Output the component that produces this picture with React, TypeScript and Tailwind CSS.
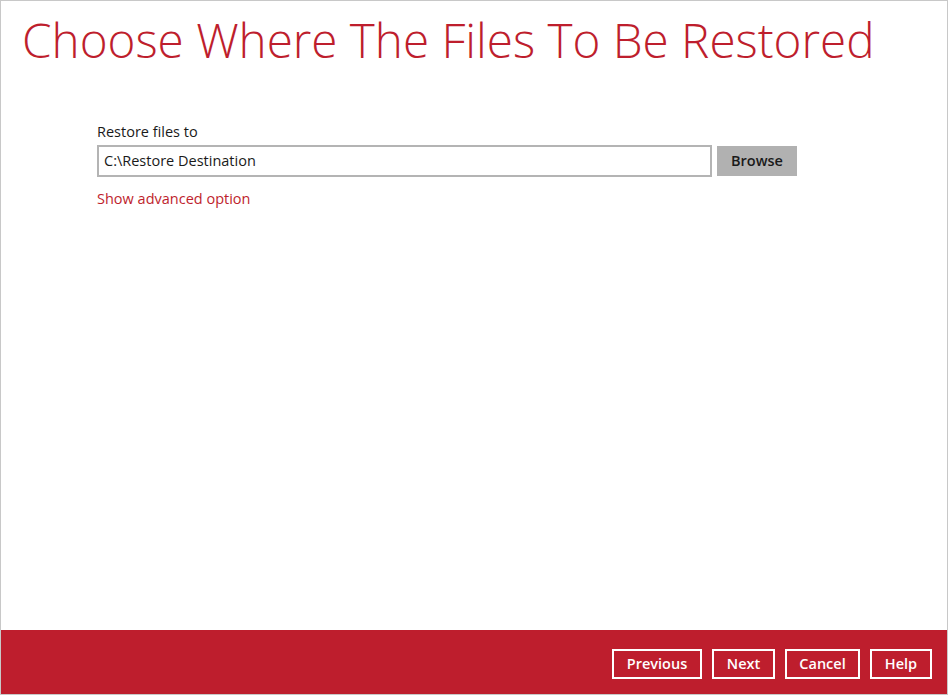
import React from "react";

export default function App() {
  const font = { fontFamily: '"Open Sans", "Noto Sans", sans-serif' };
  const btn =
    "h-[30px] border-2 border-white text-white font-semibold text-[14.5px] flex items-center justify-center";
  return (
    <div style={font} className="w-[948px] h-[695px] border border-[#c8c8c8] bg-white flex flex-col">
      <div className="flex-1 flex flex-col">
        <h1 className="text-[#be1e2d] text-[47.6px] font-light leading-none pl-[21px] pt-[15px]">
          Choose Where The Files To Be Restored
        </h1>
        <div className="pl-[96px] pt-[58px] flex flex-col">
          <div className="text-[14.5px] text-[#1a1a1a] leading-[19px]">Restore files to</div>
          <div className="flex items-center gap-[5px] mt-[4px]">
            <div className="w-[615px] h-[32px] border-2 border-[#b4b4b4] flex items-center pl-[5px] text-[14.5px] text-[#1a1a1a]">
              C:\Restore Destination
            </div>
            <div className="w-[80px] h-[30px] bg-[#b1b1b1] flex items-center justify-center text-[14.5px] font-semibold text-[#1a1a1a]">
              Browse
            </div>
          </div>
          <div className="text-[14.5px] text-[#be1e2d] mt-[12px] leading-[19px]">Show advanced option</div>
        </div>
      </div>
      <div className="h-[64px] bg-[#be1e2d] flex items-center justify-end gap-[10px] pr-[15px] pt-[4px]">
        <div className={`${btn} w-[90px]`}>Previous</div>
        <div className={`${btn} w-[63px]`}>Next</div>
        <div className={`${btn} w-[75px]`}>Cancel</div>
        <div className={`${btn} w-[62px]`}>Help</div>
      </div>
    </div>
  );
}
